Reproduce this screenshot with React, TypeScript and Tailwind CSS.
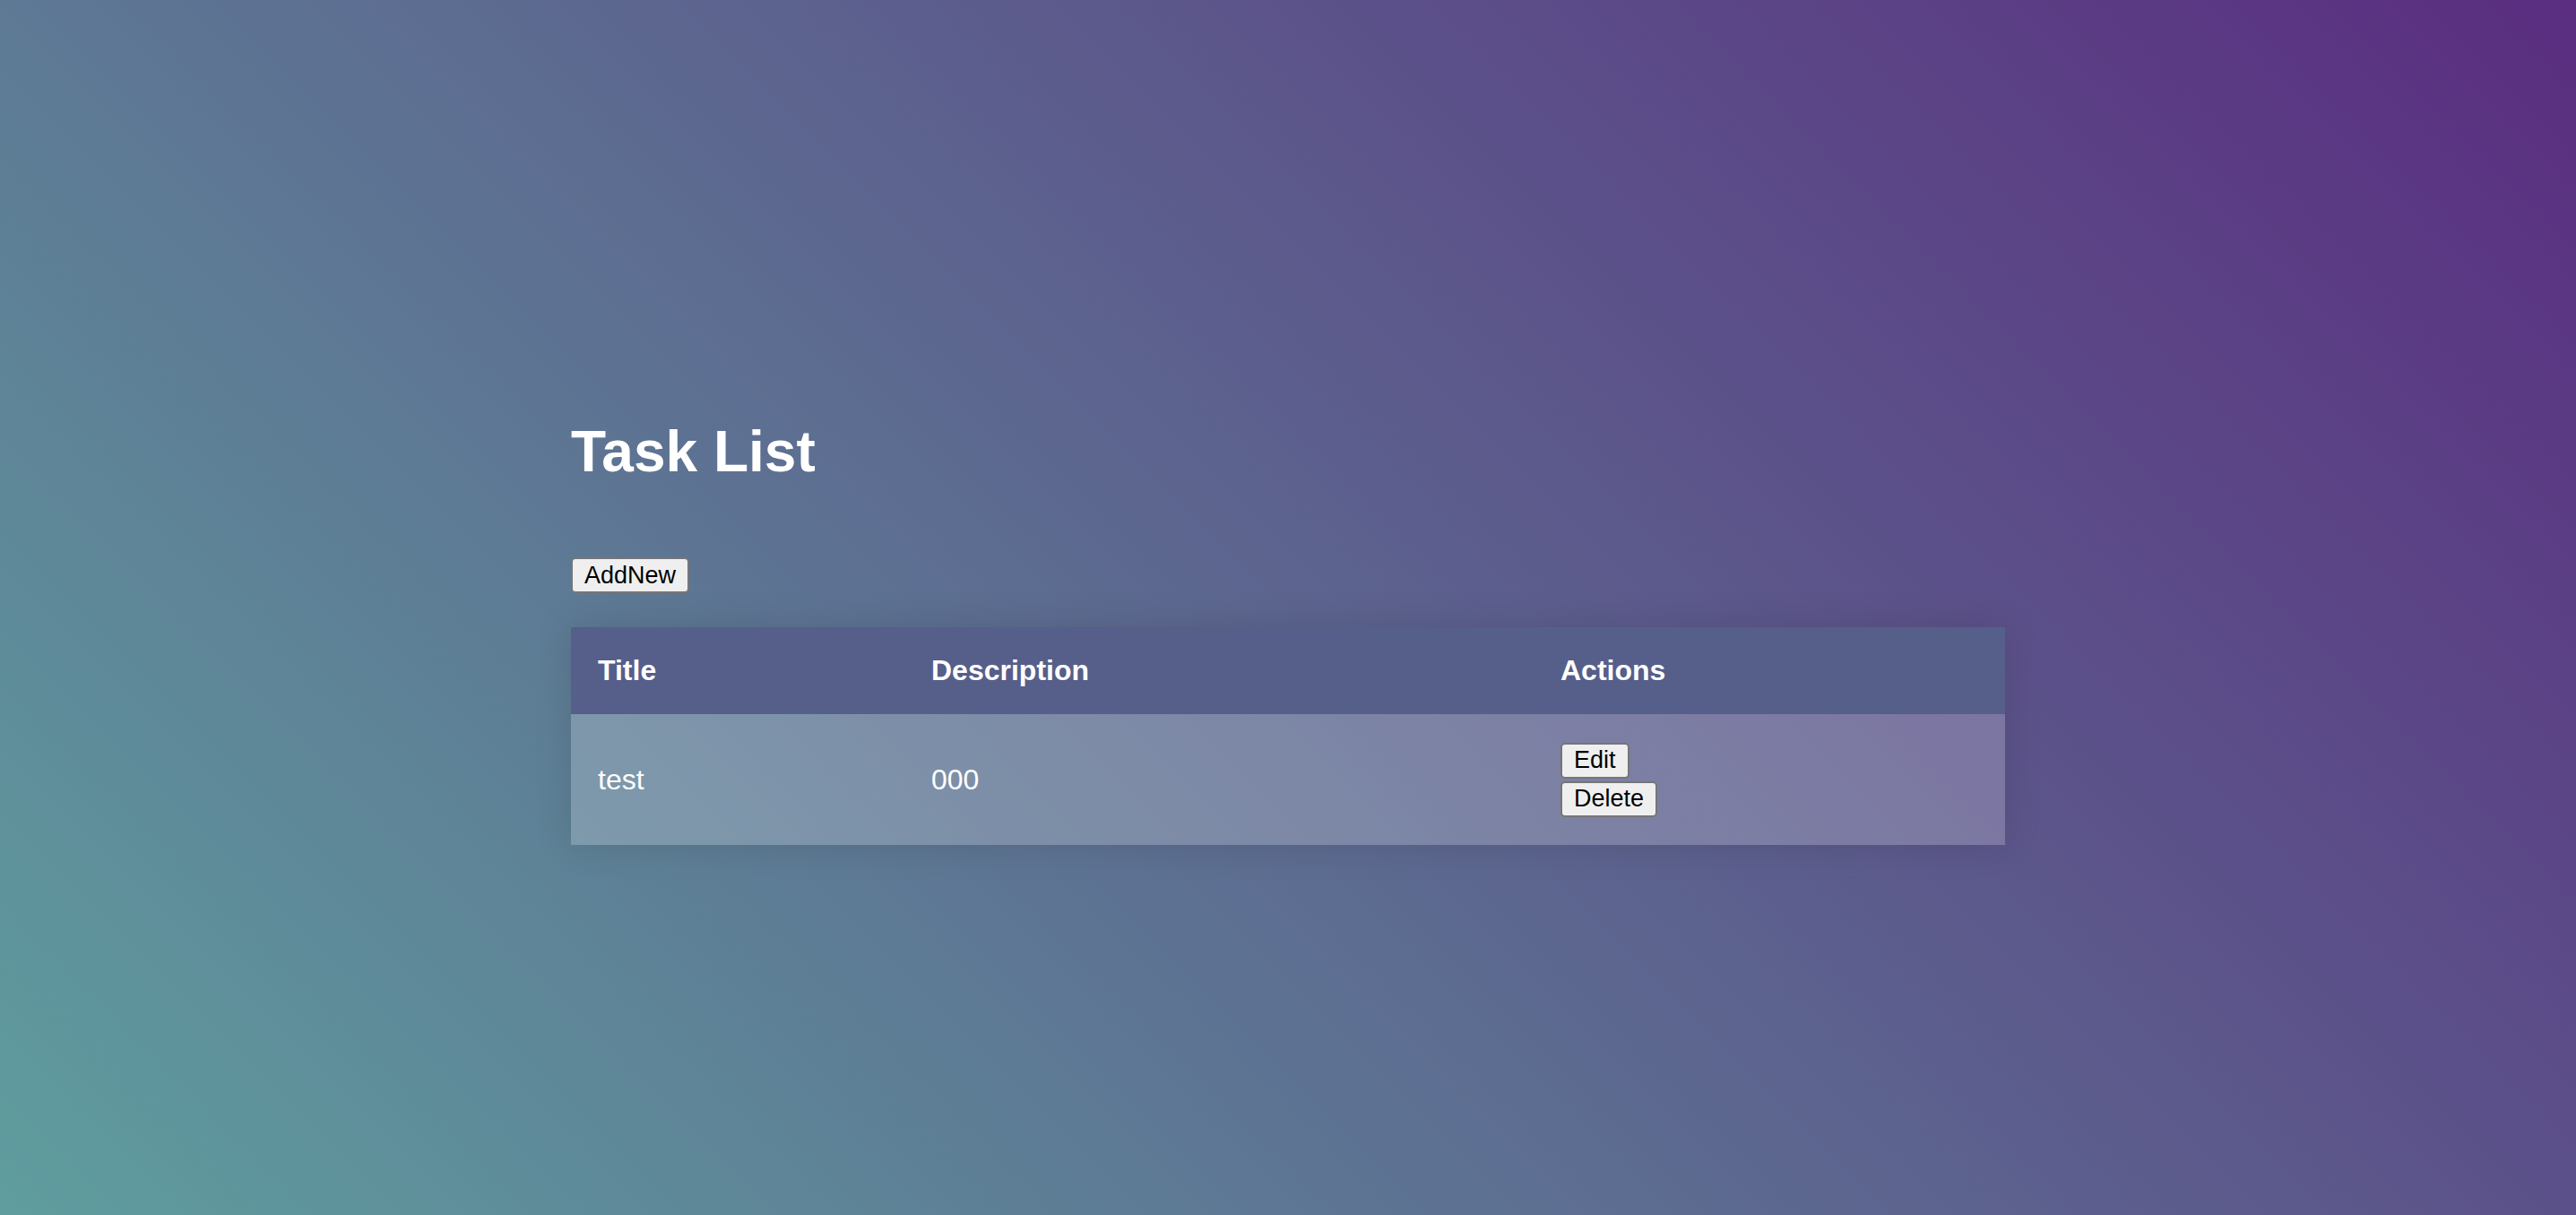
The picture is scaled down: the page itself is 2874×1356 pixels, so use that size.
// Task list page
const tasks = [{ id: 1, title: 'test', description: '000' }];

function NativeButton({ children }: { children: React.ReactNode }) {
  return (
    <button className="h-[40px] rounded-[5px] border-2 border-[#767676] bg-[#efefef] px-[13px] text-[27px] leading-none text-black">
      {children}
    </button>
  );
}

export default function App() {
  return (
    <div
      className="min-h-[1356px] w-full bg-[linear-gradient(45deg,#5f9d9e,#5a2d80)] text-white"
      style={{ fontFamily: '"Liberation Sans", Arial, Helvetica, sans-serif' }}
    >
      <div className="mx-auto flex w-[1600px] flex-col items-start pt-[467px]">
        <h1 className="text-[64px] font-bold leading-[74px]">Task List</h1>

        <div className="mt-[81px]">
          <NativeButton>AddNew</NativeButton>
        </div>

        <div className="mt-[38px] w-full shadow-[0_0_40px_rgba(0,0,0,0.12)]">
          {/* header */}
          <div className="grid h-[97px] grid-cols-[372px_702px_526px] items-center bg-[#565e8a] text-[32px] font-bold leading-[37px]">
            <div className="px-[30px]">Title</div>
            <div className="px-[30px]">Description</div>
            <div className="px-[30px]">Actions</div>
          </div>

          {tasks.map((t) => (
            <div
              key={t.id}
              className="grid h-[146px] grid-cols-[372px_702px_526px] items-center bg-white/20 text-[32px] leading-[37px]"
            >
              <div className="px-[30px]">{t.title}</div>
              <div className="px-[30px]">{t.description}</div>
              <div className="flex flex-col items-start gap-[3px] px-[30px]">
                <NativeButton>Edit</NativeButton>
                <NativeButton>Delete</NativeButton>
              </div>
            </div>
          ))}
        </div>
      </div>
    </div>
  );
}
